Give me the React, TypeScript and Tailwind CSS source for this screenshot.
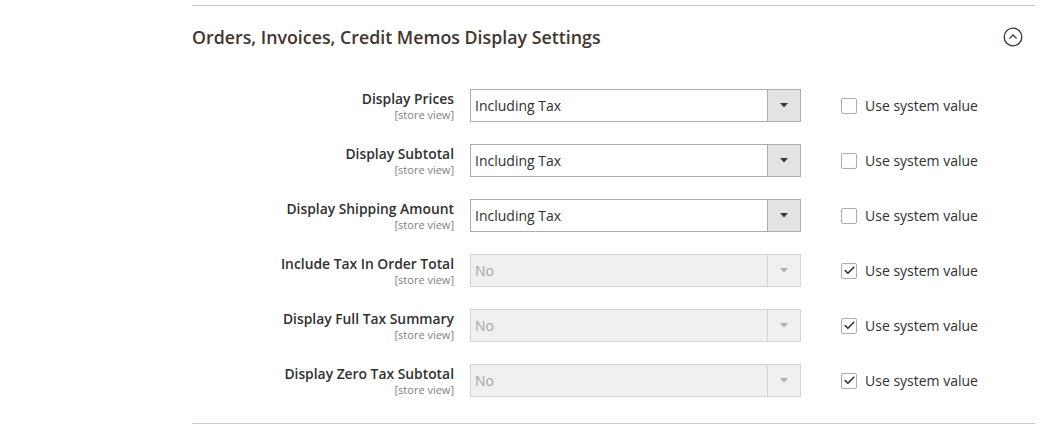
import { Check } from "lucide-react"

type Row = {
  label: string
  value: string
  disabled: boolean
}

const rows: Row[] = [
  { label: "Display Prices", value: "Including Tax", disabled: false },
  { label: "Display Subtotal", value: "Including Tax", disabled: false },
  { label: "Display Shipping Amount", value: "Including Tax", disabled: false },
  { label: "Include Tax In Order Total", value: "No", disabled: true },
  { label: "Display Full Tax Summary", value: "No", disabled: true },
  { label: "Display Zero Tax Subtotal", value: "No", disabled: true },
]

function FakeSelect({ value, disabled }: { value: string; disabled: boolean }) {
  return (
    <div
      className={
        disabled
          ? "flex h-[33px] w-[331px] border border-[#d4d4d4] bg-[#f0f0f0]"
          : "flex h-[33px] w-[331px] border border-[#adadad] bg-white"
      }
    >
      <div
        className={
          disabled
            ? "flex flex-1 items-center pl-[4px] text-[14px] text-[#a4a4a4]"
            : "flex flex-1 items-center pl-[4px] text-[14px] text-[#303030]"
        }
      >
        {value}
      </div>
      <div
        className={
          disabled
            ? "flex w-[33px] items-center justify-center border-l border-[#d4d4d4] bg-[#f0f0f0]"
            : "flex w-[33px] items-center justify-center border-l border-[#adadad] bg-[#e3e3e3]"
        }
      >
        <svg width="8" height="5" viewBox="0 0 8 5">
          <path d="M0 0 L8 0 L4 4.5 Z" fill={disabled ? "#b0b0b0" : "#41362f"} />
        </svg>
      </div>
    </div>
  )
}

function SystemValue({ checked }: { checked: boolean }) {
  return (
    <label className="flex items-center">
      <span className="flex h-[16px] w-[16px] items-center justify-center rounded-[2px] border border-[#adadad] bg-white">
        {checked && <Check className="h-[13px] w-[13px] text-[#303030]" strokeWidth={3} />}
      </span>
      <span className="ml-[8px] text-[14px] text-[#303030]">Use system value</span>
    </label>
  )
}

export default function App() {
  return (
    <div
      className="h-[425px] w-[1040px] bg-white pl-[192px] pr-[5px] pt-[5px]"
      style={{ fontFamily: '"Open Sans", "Noto Sans", sans-serif' }}
    >
      <section className="border-y border-[#cccccc] pb-[26px]">
        <div className="flex items-center justify-between pt-[19px] pb-[40px]">
          <h2 className="text-[17.8px] leading-[24px] font-semibold text-[#41362f]">
            Orders, Invoices, Credit Memos Display Settings
          </h2>
          <svg width="20" height="20" viewBox="0 0 20 20" className="mr-[12px]">
            <circle cx="10" cy="10" r="8.8" fill="none" stroke="#41362f" strokeWidth="1.3" />
            <path d="M6.4 11.6 L10 8 L13.6 11.6" fill="none" stroke="#41362f" strokeWidth="1.3" />
          </svg>
        </div>

        <div className="flex flex-col gap-[22px]">
          {rows.map((row) => (
            <div key={row.label} className="flex items-start">
              <div className="w-[262px] pt-[1px] text-right">
                <div className="text-[13.85px] leading-[18px] font-semibold text-[#303030]">{row.label}</div>
                <div className="text-[11px] leading-[13px] text-[#808080]">[store view]</div>
              </div>
              <div className="ml-[16px]">
                <FakeSelect value={row.value} disabled={row.disabled} />
              </div>
              <div className="ml-[40px] flex h-[33px] items-center">
                <SystemValue checked={row.disabled} />
              </div>
            </div>
          ))}
        </div>
      </section>
    </div>
  )
}
